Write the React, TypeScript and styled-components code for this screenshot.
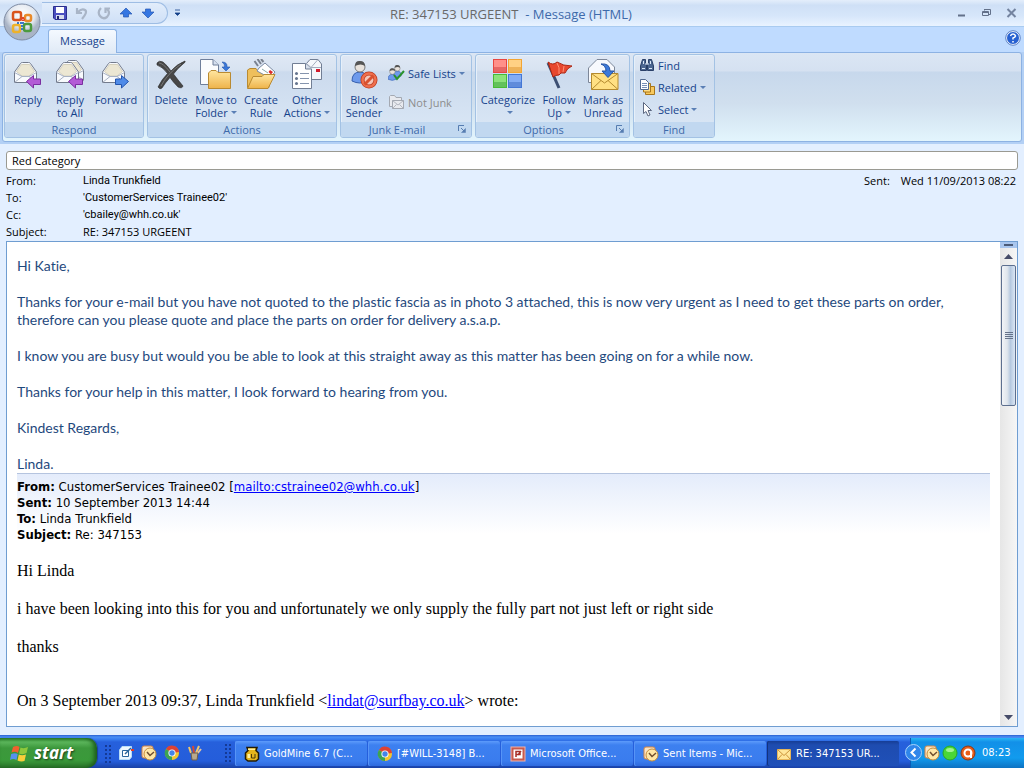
import React from "react";
import styled, { createGlobalStyle, css } from "styled-components";

const Global = createGlobalStyle`
  * { box-sizing: border-box; }
  body { margin: 0; background: #e3efff; }
  button { font: inherit; color: inherit; margin: 0; padding: 0; border: 0; background: none; cursor: default; }
  p, dl, dd, h1, h2 { margin: 0; font-weight: normal; }
`;

const uiFont = `"Open Sans", "Noto Sans", sans-serif`;
const tahoma = `"DejaVu Sans Condensed", "DejaVu Sans", sans-serif`;

const Window = styled.div`
  min-height: 100vh;
  display: flex;
  flex-direction: column;
  font: 11px/13px ${uiFont};
  color: #15428b;
`;

/* ---------- title bar ---------- */
const TitleBar = styled.header`
  position: relative;
  display: flex;
  height: 27px;
  background: linear-gradient(#e4eefb, #cfe0f6 20%, #d6e6fa 60%, #e9f3ff);
  border-bottom: 1px solid #a9cbf0;
`;
const OfficeButton = styled.button`
  position: absolute;
  left: 3px;
  top: 3px;
  z-index: 2;
  width: 38px;
  height: 38px;
`;
const QuickAccess = styled.div`
  display: flex;
  align-items: center;
  gap: 6px;
  width: 126px;
  height: 22px;
  margin: 2px 0 0 42px;
  padding-left: 10px;
  border: 1px solid #9ebde4;
  border-left: 0;
  border-radius: 0 11px 11px 0;
  background: linear-gradient(#e2edfb, #cfe0f7);
`;
const QuickButton = styled.button`
  display: flex;
  width: 16px;
  height: 16px;
`;
const Customize = styled.button`
  display: flex;
  width: 8px;
  margin: 9px 0 0 6px;
  height: 8px;
`;
const Caption = styled.h1`
  flex: 1;
  padding: 5px 0 0 208px;
  font-size: 13px;
  line-height: 18px;
  color: #3e6aaa;
  white-space: pre;
`;
const CaptionName = styled.span`
  color: #696969;
`;
const WindowButtons = styled.div`
  display: flex;
  gap: 9px;
  padding: 5px 4px 0 0;
  height: 22px;
`;

/* ---------- ribbon ---------- */
const TabRow = styled.nav`
  display: flex;
  height: 25px;
  align-items: flex-end;
  justify-content: space-between;
  padding: 0 3px 0 48px;
  background: #bfdbff;
`;
const Tab = styled.button`
  position: relative;
  z-index: 1;
  width: 69px;
  height: 24px;
  margin-bottom: -1px;
  padding-bottom: 2px;
  border: 1px solid #8db2e3;
  border-bottom: 0;
  border-radius: 3px 3px 0 0;
  background: linear-gradient(#f4f9ff, #e0eaf6);
`;
const HelpButton = styled.button`
  width: 16px;
  height: 16px;
  margin-bottom: 6px;
`;
const RibbonFrame = styled.section`
  padding: 0 2px 2px;
  background: #b3d0f5;
`;
const Ribbon = styled.div`
  display: flex;
  gap: 3px;
  height: 90px;
  padding: 1px 1px 3px;
  border: 1px solid #8db2e3;
  border-radius: 3px;
  background: linear-gradient(#dbe6f4 0, #d5e1f1 18px, #c7d8ec 19px, #d0dfee 50px, #e3f5fd);
`;
const Group = styled.section<{ $w: number }>`
  display: flex;
  flex-direction: column;
  width: ${(p) => p.$w}px;
  border: 1px solid #a3c2e4;
  border-radius: 3px;
  box-shadow: inset 1px 1px 0 #e6f0fa;
  overflow: hidden;
  background: linear-gradient(#dfe8f5 0, #d8e3f1 15px, #cbdaed 17px, #dbe8f6);
`;
const GroupItems = styled.div`
  flex: 1;
  display: flex;
  padding: 2px 2px 0;
`;
const GroupTitle = styled.h2<{ $launcher?: boolean }>`
  position: relative;
  height: 15px;
  padding-right: ${(p) => (p.$launcher ? 18 : 0)}px;
  font-size: 11px;
  line-height: 15px;
  text-align: center;
  color: #3e6aaa;
  background: #c1d8f0;
`;
const Launcher = styled.button`
  position: absolute;
  right: 4px;
  top: 3px;
  display: flex;
`;
const BigButton = styled.button<{ $w: number }>`
  display: flex;
  flex-direction: column;
  align-items: center;
  width: ${(p) => p.$w}px;
  padding-top: 2px;
  white-space: nowrap;
  & > svg { margin-bottom: 2px; flex: none; }
`;
const SmallColumn = styled.div<{ $gap: number; $top: number }>`
  display: flex;
  flex-direction: column;
  align-items: flex-start;
  gap: ${(p) => p.$gap}px;
  padding: ${(p) => p.$top}px 0 0 3px;
`;
const SmallButton = styled.button`
  display: flex;
  align-items: center;
  gap: 3px;
  height: 16px;
  white-space: nowrap;
  &:disabled { color: #8d8d8d; }
`;
const Arrow = styled.span`
  display: inline-block;
  margin-left: 3px;
  vertical-align: 3px;
  border: 3px solid transparent;
  border-top-color: #5a7fb5;
  border-bottom: 0;
`;

/* ---------- message header ---------- */
const Pane = styled.main`
  flex: 1;
  display: flex;
  flex-direction: column;
  padding: 7px 6px 8px;
  background: #e3efff;
`;
const InfoBar = styled.div`
  height: 19px;
  padding: 0 5px;
  border: 1px solid #9a9a92;
  border-radius: 3px;
  background: #fff;
  line-height: 18px;
  color: #000;
`;
const Headers = styled.dl`
  display: grid;
  grid-template-columns: 77px 1fr auto auto;
  line-height: 17px;
  padding: 2px 2px 1px 0;
  color: #000;
`;
const Value = styled.dd<{ $wide?: boolean; $address?: boolean }>`
  ${(p) => p.$wide && css`grid-column: 2 / -1;`}
  ${(p) => p.$address && css`font-family: Roboto, ${uiFont};`}
`;
const SentLabel = styled.dt`
  padding-right: 11px;
`;

/* ---------- message body ---------- */
const Reader = styled.div`
  flex: 1;
  display: flex;
  border: 1px solid #6f9dd1;
  background: #fff;
`;
const Letter = styled.article`
  flex: 1;
  padding: 15px 10px 14px;
`;
const Reply = styled.div`
  font: 14px/18px Lato, "Open Sans", sans-serif;
  font-variant-ligatures: none;
  color: #1f497d;
  & > p + p { margin-top: 18px; }
`;
const Quoted = styled.div`
  height: 74px;
  padding-top: 5px;
  border-top: 1px solid #b5c4df;
  background: linear-gradient(#e4ecfb, #fff 60px);
  font: 13px/16px ${tahoma};
  color: #000;
`;
const Original = styled.div`
  font: 16px/19px "Liberation Serif", serif;
  color: #000;
  padding-top: 14px;
  & > p + p { margin-top: 19px; }
  & > p:last-child { margin-top: 35px; }
`;
const Link = styled.a`
  color: #0000ff;
`;
const ScrollBar = styled.div`
  display: flex;
  flex-direction: column;
  align-items: center;
  width: 17px;
  background: linear-gradient(90deg, #e6e6e6, #f6f6f6);
`;
const Splitter = styled.div`
  width: 17px;
  height: 6px;
  padding: 2px 4px;
  background: #a9c6ee;
  &::after { content: ""; display: block; height: 2px; background: #4b5b78; }
`;
const ScrollButton = styled.button`
  display: flex;
  align-items: center;
  justify-content: center;
  width: 17px;
  height: 17px;
`;
const Thumb = styled.div`
  display: flex;
  flex-direction: column;
  align-items: center;
  justify-content: center;
  gap: 1px;
  width: 15px;
  height: 141px;
  border: 1px solid #5d6f8f;
  border-radius: 2px;
  background: linear-gradient(90deg, #f2f4f7, #dfe5ec 40%, #b5c8df 65%, #dbe6f4);
`;
const Grip = styled.i`
  width: 8px;
  height: 1px;
  background: #66738a;
`;
const Spring = styled.div`
  flex: 1;
`;

/* ---------- task bar ---------- */
const TaskBar = styled.footer`
  display: flex;
  height: 33px;
  font: 11px/16px ${tahoma};
  color: #fff;
  background: linear-gradient(#2a5fd0 0, #4a8ff5 2px, #3a80f2 4px, #2660dc 7px, #245ddb 26px, #1941a5);
`;
const Start = styled.button`
  display: flex;
  align-items: center;
  gap: 5px;
  width: 97px;
  height: 30px;
  margin-top: 3px;
  padding-left: 10px;
  border-radius: 0 10px 10px 0;
  background: linear-gradient(#2f8a2f, #5cb65c 4px, #3c983c 10px, #3a9a3a 22px, #2a742a);
  box-shadow: inset -3px 0 4px #1c5c1c, 1px 0 1px #1a3f9a;
  font: italic bold 17px/20px "Open Sans", sans-serif;
  text-shadow: 1px 1px 2px #1b3d1b;
`;
const Handle = styled.i`
  width: 6px;
  height: 20px;
  margin: 9px 0 0;
  background: radial-gradient(circle at 1px 1px, #143a97 1px, transparent 1px) 0 0 / 4px 4px;
`;
const QuickLaunch = styled.div`
  display: flex;
  align-items: center;
  gap: 7px;
  width: 128px;
  margin-top: 3px;
  padding-left: 8px;
  & > ${Handle} { margin-top: 3px; }
`;
const Tasks = styled.div`
  display: flex;
  flex: 1;
  gap: 1px;
  padding: 6px 9px 0 4px;
`;
const Task = styled.button<{ $active?: boolean }>`
  display: flex;
  align-items: center;
  gap: 4px;
  flex: 0 1 132px;
  height: 25px;
  padding-left: 9px;
  border-radius: 2px;
  white-space: nowrap;
  background: ${(p) => (p.$active ? "linear-gradient(#163d96, #1e4cb0 4px, #1f50b8)" : "linear-gradient(#5d9bfb, #3d80f0 4px, #3a7cee 20px, #2f6ade)")};
  box-shadow: inset 1px 0 0 ${(p) => (p.$active ? "#12337e" : "#5794f7")};
`;
const Tray = styled.div`
  position: relative;
  display: flex;
  align-items: center;
  gap: 2px;
  width: 114px;
  height: 30px;
  margin-top: 3px;
  padding-left: 13px;
  border-left: 1px solid #0a5bb5;
  background: linear-gradient(#29b6f5, #1290e8 4px, #119bee 20px, #0d72c2);
`;
const TrayToggle = styled.button`
  position: absolute;
  left: -6px;
  top: 6px;
  width: 17px;
  height: 17px;
`;
const Clock = styled.time`
  padding-left: 4px;
`;

/* ---------- drawings ---------- */
const Envelope = ({ x = 0, y = 0 }: { x?: number; y?: number }) => (
  <g transform={`translate(${x} ${y})`} stroke="#737b8c" strokeWidth="1" strokeLinejoin="round">
    <path d="M.5 10 6.500 1.500Q7 .5 8.500 .5H14.500Q16 .5 16.500 1.500L22.500 10V20.500H.5z" fill="#f8fafd" />
    <path d="M2.500 9.500 7.500 2.500H15.500L20.500 9.500 15 14H8z" fill="#ece7d3" stroke="#d5d0bd" />
    <path d="M.5 10.500 8 14.500H15L22.500 10.500M.5 20.500 8 14.500M22.500 20.500 15 14.500" fill="none" stroke="#a8b2c4" />
  </g>
);
const ReplyArrow = () => <path d="M13.500 22.500 20.500 16.500V20H27.500V25.500H20.500V29z" fill="#b35bd6" stroke="#7b2fa0" />;
const ReplyIcon = () => <svg width="30" height="32"><Envelope x={1} y={3} /><ReplyArrow /></svg>;
const ReplyAllIcon = () => <svg width="30" height="32"><Envelope x={6} y={1} /><Envelope x={1} y={3} /><ReplyArrow /></svg>;
const ForwardIcon = () => (
  <svg width="30" height="32"><Envelope x={1} y={3} /><path d="M27.500 22.500 20.500 16.500V20H14.500V25.500H20.500V29z" fill="#4f8be8" stroke="#2455ae" /></svg>
);
const DeleteIcon = () => (
  <svg width="32" height="32">
    <path d="M2 4Q4 1 8 3Q12 6 16 12Q22 5 30 2Q31 3 28 5Q22 10 18.500 15Q23 21 28 27Q27 30 23 28Q18 23 15 18.500Q10 24 7 29Q5 31 3 28Q7 20 12.500 14.500Q8 8 2 6z" fill="#474747" stroke="#292929" strokeWidth=".6" />
    <path d="M4 4Q8 4 15 13M26 5Q12 15 6 27" stroke="#777" fill="none" />
  </svg>
);
const Defs = () => (
  <svg width="0" height="0" style={{ position: "absolute" }} aria-hidden="true">
    <defs>
      <linearGradient id="folder" x2="0" y2="1"><stop stopColor="#ffe6a0" /><stop offset="1" stopColor="#eeb34a" /></linearGradient>
      <radialGradient id="orb" cx=".5" cy=".3"><stop stopColor="#fff" /><stop offset=".7" stopColor="#e2e7ef" /><stop offset="1" stopColor="#a9b4c6" /></radialGradient>
    </defs>
  </svg>
);
const MoveIcon = () => (
  <svg width="32" height="32">
    <path d="M.5.5H13L18.500 6V25.500H.5z" fill="#fbfcfe" stroke="#6f7f9b" /><path d="M13 .5V6H18.500" fill="#d5dfee" stroke="#6f7f9b" />
    <path d="M22 3Q27.500 3 27 8H30L26 12 22 8H24.500Q25 5 22 3" fill="#3976d8" stroke="#2456aa" strokeWidth=".6" />
    <path d="M8.500 14 11 11.500H16L18 13.500H30.500V29.500H8.500z" fill="url(#folder)" stroke="#b98a32" />
  </svg>
);
const RuleIcon = () => (
  <svg width="32" height="32">
    <path d="M2.500 28.500V11L5 9.500H11L13 12H24V28.500z" fill="#eebf5c" stroke="#b98a32" />
    <path d="M14 9 20 4 30 13 25 19 12 12z" fill="#fff" stroke="#7c8ba3" /><path d="M9.500 2 13 7M12.500 0 16 5M16 0 18.500 3" stroke="#7a828f" strokeWidth="2" />
    <path d="M17 10 23 14" stroke="#8aa" /><path d="M25 11 28 13 26 15.500 23.500 13z" fill="#d92b2b" />
    <path d="M2.500 29.500 8 17.500H17L19 15.500H30L23 29.500z" fill="url(#folder)" stroke="#b98a32" />
  </svg>
);
const OtherIcon = () => (
  <svg width="32" height="32">
    <path d="M15.500 4.500 19 .5H27L30.500 5V20.500H15.500z" fill="#f5f7fb" stroke="#717e94" /><path d="M15.500 4.500 20 8.500 27 .5M20 8.500H30" fill="none" stroke="#a3adbe" /><path d="M25 10H29V13H25z" fill="#d21b2c" />
    <path d="M1.500 4.500H14.500L20.500 10V29.500H1.500z" fill="#fff" stroke="#717e94" /><path d="M14.500 4.500V10H20.500" fill="#d8e0ec" stroke="#717e94" />
    <path d="M9 14.500H18M9 19.500H18M9 24.500H18" stroke="#8594ad" />
    {[14.5, 19.5, 24.5].map((y) => <circle key={y} cx="5.500" cy={y} r="1.500" fill="#66758e" />)}
  </svg>
);
const Person = () => (
  <><path d="M1 21Q1 12 9 12Q16 12 16 21Q9 25 1 21" fill="#6d9aec" stroke="#365fae" /><circle cx="9" cy="7" r="5" fill="#e8e2dc" stroke="#777" /><path d="M4 6Q4 .5 9 1Q14 1 14 6Q10 3 4 6" fill="#555" /></>
);
const BlockIcon = () => (
  <svg width="32" height="32"><g transform="translate(3 1)"><Person /></g><circle cx="21" cy="21" r="6.500" fill="#f5c6b9" stroke="#b93a1e" strokeWidth="4" /><circle cx="21" cy="21" r="6.500" fill="none" stroke="#ef6f4d" strokeWidth="2.500" /><path d="M16.500 25.500 25.500 16.500" stroke="#d9512f" strokeWidth="3" /></svg>
);
const SafeIcon = () => (
  <svg width="17" height="16"><g transform="scale(.55)"><g transform="translate(8 -1)"><Person /></g><g transform="translate(-1 5)"><Person /></g></g><path d="M6 10 9 14 16 6" fill="none" stroke="#29922d" strokeWidth="2" /></svg>
);
const NotJunkIcon = () => (
  <svg width="17" height="16" fill="#e8eaef" stroke="#a4a9b2"><path d="M1.500 12.500V2.500L2.500 1.500H6.500L8 3.500H13.500V12.500z" /><path d="M4.500 6.500H15.500V14.500H4.500z" /><path d="M4.500 6.500 10 11 15.500 6.500M4.500 14.500 8.500 10.500M15.500 14.500 11.500 10.500" fill="none" strokeWidth=".8" /></svg>
);
const CategorizeIcon = () => (
  <svg width="32" height="32">
    {[[1, 0, "#e84741", "#ff9089"], [16, 0, "#f3a532", "#ffd184"], [1, 15, "#47ba36", "#8ce27a"], [16, 15, "#4377d6", "#83acf4"]].map(([x, y, a, b]) => (
      <g key={`${x}-${y}`}><rect x={Number(x) + 0.5} y={Number(y) + 0.5} width="13" height="13" fill={String(a)} fillOpacity=".8" stroke={String(a)} /><rect x={Number(x) + 1} y={Number(y) + 1} width="12" height="7" fill={String(b)} /></g>
    ))}
  </svg>
);
const FlagIcon = () => (
  <svg width="32" height="32"><path d="M5 4 16 29" stroke="#3c4f73" strokeWidth="3" /><path d="M5 3Q10 7 14 3Q20 7 29 7Q24 9 22 14Q17 13 16 16Q12 16 10 18z" fill="#e8482e" stroke="#ad2713" /><path d="M14 4Q17 8 16 15M21 7 20 13" stroke="#ff9277" fill="none" /></svg>
);
const UnreadIcon = () => (
  <svg width="32" height="32"><path d="M1.500 9 10 .5H20L27.500 8V23.500H1.500z" fill="#f7f9fd" stroke="#7d8799" /><path d="M4.500 14.500H31V30.500H4.500z" fill="#ffe083" stroke="#b48a2f" /><path d="M4.500 14.500 17.500 24 31 14.500M4.500 30.500 14 21.500M31 30.500 21 21.500" fill="none" stroke="#b48a2f" /><path d="M14 5Q23 4 23 12H27L21 18.500 15 12H19Q19 7 14 5" fill="#3b79da" stroke="#2453a3" /></svg>
);
const BinocularIcon = () => (
  <svg width="16" height="16" fill="#4c6690" stroke="#2a4068"><path d="M3.500 2.500H6.500V6L7.500 8V13.500H1.500V9zM9.500 2.500H12.500L14.500 9V13.500H8.500V8L9.500 6z" /><path d="M6 7H10M3 11.500H6M10 11.500H13M4.500 4V7M11.500 4V7" stroke="#dce8f7" /></svg>
);
const RelatedIcon = () => (
  <svg width="16" height="16"><path d="M6.500 9V6.500H9L10 7.500H15.500V15.500H6.500z" fill="#f8c95e" stroke="#a8761b" /><path d="M4.500 6V4.500H11.500V13H4.500z" fill="#ffdc83" stroke="#a8761b" /><path d="M1.500.5H6.500L9.500 3.500V10.500H1.500z" fill="#fff" stroke="#52698e" /><path d="M3 4.500H8M3 6.500H8M3 8.500H8" stroke="#7891b8" /></svg>
);
const SelectIcon = () => <svg width="16" height="16"><path d="M4.500 1.500V12.500L7 10.500 9 15 11 14 9 9.500H12.500z" fill="#fff" stroke="#5b6780" /></svg>;

const LogoPane = ({ x, y, w, c }: { x: number; y: number; w: number; c: string }) => <rect x={x} y={y} width={w} height={w} rx="2" fill="none" stroke={c} strokeWidth="2.500" />;
const OfficeIcon = () => (
  <svg width="38" height="38"><circle cx="19" cy="19" r="18" fill="url(#orb)" stroke="#7f8ca4" />
    <LogoPane x={10} y={9} w={8} c="#d9531c" /><LogoPane x={22} y={12} w={6} c="#e98b2a" /><LogoPane x={10} y={22} w={7} c="#eeb22a" /><LogoPane x={21} y={21} w={7} c="#4c9a3e" />
    <path d="M17.500 16.500H22M20 14V18" stroke="#e2452a" strokeWidth="2" strokeDasharray="2 1" /><path d="M14 20H21M19 19V28" stroke="#3a78c9" strokeWidth="2" strokeDasharray="2 1" /></svg>
);
const SaveIcon = () => <svg width="16" height="16"><path d="M1.500 1.500H14.500V14.500H3L1.500 13z" fill="#4b4fc0" stroke="#2a2e8d" /><path d="M4 2H12V8H4z" fill="#fff" /><path d="M4 10H12V14H4z" fill="#d7dcec" /><path d="M5 11H7V14H5z" fill="#20246f" /></svg>;
const UndoIcon = () => <svg width="16" height="16"><path d="M3 3V8H8M4 7Q8 3 11 5T8 14" fill="none" stroke="#a9b5c7" strokeWidth="2.200" /></svg>;
const RedoIcon = () => <svg width="16" height="16"><path d="M5 3Q1 7 4 11T11 12Q15 8 11 4M14 3.500H9.500V8" fill="none" stroke="#a9b5c7" strokeWidth="2.200" /></svg>;
const UpIcon = () => <svg width="16" height="16"><path d="M8 3 14 9H10.500V12H5.500V9H2z" fill="#3677e2" stroke="#2557b1" strokeWidth=".7" /></svg>;
const DownIcon = () => <svg width="16" height="16"><path d="M8 13 14 7H10.500V4H5.500V7H2z" fill="#3677e2" stroke="#2557b1" strokeWidth=".7" /></svg>;
const WinIcon = () => (
  <svg width="19" height="19"><path d="M3 3Q7 1 9.500 3L8 9Q5 7 1.500 8.500z" fill="#f0612e" /><path d="M10.500 3.500Q14 5 18 3L16.500 9Q13 11 9 9.500z" fill="#8ec83c" /><path d="M1.200 10Q5 8.500 7.700 10L6.500 16Q3 14 0 16z" fill="#5691ef" /><path d="M8.800 10.500Q12 12 16 10.500L14.500 17Q11 18 7.500 16.500z" fill="#f8ce3a" /></svg>
);
const ChromeIcon = () => (
  <svg width="16" height="16"><circle cx="8" cy="8" r="7" fill="#f4c52e" /><path d="M8 8 2 4A7 7 0 0 1 15 7z" fill="#dd4235" /><path d="M8 8 2 4A7 7 0 0 0 8 15z" fill="#3ca352" /><circle cx="8" cy="8" r="3.600" fill="#fff" /><circle cx="8" cy="8" r="2.700" fill="#4484e8" /></svg>
);
const OutlookIcon = () => <svg width="16" height="16"><rect x="1" y="1" width="11" height="12" rx="2" fill="#fbe3c2" stroke="#d18443" /><circle cx="9" cy="9" r="6" fill="#ffe7a7" stroke="#c78e3b" /><path d="M6 7 9 10.500 13 7" fill="none" stroke="#704e30" strokeWidth="1.500" /></svg>;
const DesktopIcon = () => <svg width="16" height="16"><path d="M1.500 5 4 1.500H13.500V12L11.500 14.500H1.500z" fill="#eaf6ff" stroke="#b7dcf7" /><path d="M4.500 5.500H10.500V11.500H4.500z" fill="#fff" stroke="#28659b" /><path d="M7 9 13 3" fill="none" stroke="#28659b" strokeWidth="1.500" /><path d="M13 5H16" stroke="#e13b27" strokeWidth="2" /></svg>;
const BrushIcon = () => <svg width="16" height="16"><path d="M4 8 2 2M9 8 12 1" stroke="#f0c56a" strokeWidth="2" /><path d="M7 8 6 1" stroke="#d64b32" strokeWidth="2" /><path d="M10 9 14 4" stroke="#e5c39f" strokeWidth="2" /><path d="M4 8H11L10 15H5z" fill="#b9a98c" stroke="#6d5f4c" /></svg>;
const GoldIcon = () => <svg width="16" height="16"><path d="M3 1.500H13L12 4.500 14.500 7V13L12 15H4L1.500 13V7L4 4.500z" fill="#e5b51d" stroke="#221b08" strokeWidth="1.500" /><path d="M4 2.500H11V4H4zM3.500 8H6V12H3.500z" fill="#fff1a2" /><path d="M7.500 8V12H11V8" fill="none" stroke="#4b3a0c" /></svg>;
const PowerIcon = () => <svg width="16" height="16"><rect x="1" y="1" width="14" height="14" fill="#c75b4f" stroke="#f1b1a7" /><path d="M3.500 3.500H12.500V12.500H3.500z" fill="#fff" /><path d="M6 11V5.500H10V8.500H6M8 9 11 5" fill="none" stroke="#a72e27" strokeWidth="1.500" /></svg>;
const MailIcon = () => <svg width="16" height="16"><path d="M1.500 3.500H14.500V13.500H1.500z" fill="#ffe69a" stroke="#e5b55c" /><path d="M1.500 3.500 8 9.500 14.500 3.500M1.500 13.500 6 8.500M14.500 13.500 10 8.500" fill="none" stroke="#cb943c" /></svg>;
const GreenDot = () => <svg width="16" height="16"><circle cx="8" cy="8" r="7" fill="#4ad737" stroke="#2aa824" /><ellipse cx="8" cy="5" rx="4" ry="2" fill="#a1f391" /></svg>;
const AvastIcon = () => <svg width="16" height="16"><circle cx="8" cy="8" r="7" fill="#e85d18" stroke="#8d3514" /><circle cx="8" cy="8" r="3.500" fill="none" stroke="#fff" strokeWidth="2" /><path d="M11 6V13" stroke="#fff" strokeWidth="2" /></svg>;
const LaunchIcon = () => <svg width="9" height="9"><path d="M.5 6V.5H6" fill="none" stroke="#567db1" /><path d="M3 3 6 6" stroke="#567db1" /><path d="M7.500 3.500V7.500H3.500z" fill="#567db1" stroke="#567db1" strokeWidth=".5" /></svg>;

export default function App() {
  return (
    <Window>
      <Global />
      <Defs />
      <TitleBar>
        <OfficeButton aria-label="Office"><OfficeIcon /></OfficeButton>
        <QuickAccess>
          <QuickButton aria-label="Save"><SaveIcon /></QuickButton>
          <QuickButton aria-label="Undo"><UndoIcon /></QuickButton>
          <QuickButton aria-label="Redo"><RedoIcon /></QuickButton>
          <QuickButton aria-label="Previous item"><UpIcon /></QuickButton>
          <QuickButton aria-label="Next item"><DownIcon /></QuickButton>
        </QuickAccess>
        <Customize aria-label="Customize toolbar"><svg width="7" height="8"><path d="M1 1H6M1 4H6L3.500 6.500z" stroke="#15428b" fill="#15428b" strokeWidth=".8" /></svg></Customize>
        <Caption><CaptionName>RE: 347153 URGEENT</CaptionName>{"  - Message (HTML)"}</Caption>
        <WindowButtons>
          <QuickButton aria-label="Minimize"><svg width="16" height="16"><path d="M4 10.500H11" stroke="#63718a" strokeWidth="2" /></svg></QuickButton>
          <QuickButton aria-label="Restore"><svg width="16" height="16" fill="none" stroke="#63718a"><path d="M5.500 5.500V4.500H11.500V9.500H10M3.500 6.500H9.500V10.500H3.500zM5 4.500H11M3 7.500H9" /></svg></QuickButton>
          <QuickButton aria-label="Close"><svg width="16" height="16"><path d="M3.500 4 11.500 12M11.500 4 3.500 12" stroke="#7484a0" strokeWidth="2" /></svg></QuickButton>
        </WindowButtons>
      </TitleBar>

      <TabRow>
        <Tab>Message</Tab>
        <HelpButton aria-label="Help"><svg width="16" height="16"><circle cx="8" cy="8" r="6.500" fill="#2761d1" stroke="#fff" /><circle cx="8" cy="8" r="7.300" fill="none" stroke="#496eb7" strokeWidth=".8" /><path d="M5.500 6Q6 4 8 4T10.500 6Q10 7.500 8 8V9.500M8 11V12.500" fill="none" stroke="#fff" strokeWidth="1.500" /></svg></HelpButton>
      </TabRow>
      <RibbonFrame>
        <Ribbon>
          <Group $w={140}>
            <GroupItems>
              <BigButton $w={42}><ReplyIcon />Reply</BigButton>
              <BigButton $w={42}><ReplyAllIcon />Reply<br />to All</BigButton>
              <BigButton $w={50}><ForwardIcon />Forward</BigButton>
            </GroupItems>
            <GroupTitle>Respond</GroupTitle>
          </Group>
          <Group $w={190}>
            <GroupItems>
              <BigButton $w={42}><DeleteIcon />Delete</BigButton>
              <BigButton $w={48}><MoveIcon />Move to<span>Folder<Arrow /></span></BigButton>
              <BigButton $w={42}><RuleIcon />Create<br />Rule</BigButton>
              <BigButton $w={50}><OtherIcon />Other<span>Actions<Arrow /></span></BigButton>
            </GroupItems>
            <GroupTitle>Actions</GroupTitle>
          </Group>
          <Group $w={132}>
            <GroupItems>
              <BigButton $w={42}><BlockIcon />Block<br />Sender</BigButton>
              <SmallColumn $gap={13} $top={8}>
                <SmallButton><SafeIcon /><span>Safe Lists<Arrow /></span></SmallButton>
                <SmallButton disabled><NotJunkIcon />Not Junk</SmallButton>
              </SmallColumn>
            </GroupItems>
            <GroupTitle $launcher>Junk E-mail<Launcher aria-label="Junk e-mail options"><LaunchIcon /></Launcher></GroupTitle>
          </Group>
          <Group $w={155}>
            <GroupItems>
              <BigButton $w={60}><CategorizeIcon />Categorize<span><Arrow /></span></BigButton>
              <BigButton $w={42}><FlagIcon />Follow<span>Up<Arrow /></span></BigButton>
              <BigButton $w={46}><UnreadIcon />Mark as<br />Unread</BigButton>
            </GroupItems>
            <GroupTitle $launcher>Options<Launcher aria-label="Message options"><LaunchIcon /></Launcher></GroupTitle>
          </Group>
          <Group $w={82}>
            <GroupItems>
              <SmallColumn $gap={6} $top={0}>
                <SmallButton><BinocularIcon />Find</SmallButton>
                <SmallButton><RelatedIcon /><span>Related<Arrow /></span></SmallButton>
                <SmallButton><SelectIcon /><span>Select<Arrow /></span></SmallButton>
              </SmallColumn>
            </GroupItems>
            <GroupTitle>Find</GroupTitle>
          </Group>
        </Ribbon>
      </RibbonFrame>

      <Pane>
        <InfoBar>Red Category</InfoBar>
        <Headers>
          <dt>From:</dt><Value $address>Linda Trunkfield</Value><SentLabel>Sent:</SentLabel><Value>Wed 11/09/2013 08:22</Value>
          <dt>To:</dt><Value $wide $address>'CustomerServices Trainee02'</Value>
          <dt>Cc:</dt><Value $wide $address>'cbailey@whh.co.uk'</Value>
          <dt>Subject:</dt><Value $wide>RE: 347153 URGEENT</Value>
        </Headers>
        <Reader>
          <Letter>
            <Reply>
              <p>Hi Katie,</p>
              <p>Thanks for your e-mail but you have not quoted to the plastic fascia as in photo 3 attached, this is now very urgent as I need to get these parts on order, therefore can you please quote and place the parts on order for delivery a.s.a.p.</p>
              <p>I know you are busy but would you be able to look at this straight away as this matter has been going on for a while now.</p>
              <p>Thanks for your help in this matter, I look forward to hearing from you.</p>
              <p>Kindest Regards,</p>
              <p>Linda.</p>
            </Reply>
            <Quoted>
              <p><b>From:</b> CustomerServices Trainee02 [<Link href="mailto:cstrainee02@whh.co.uk">mailto:cstrainee02@whh.co.uk</Link>]</p>
              <p><b>Sent:</b> 10 September 2013 14:44</p>
              <p><b>To:</b> Linda Trunkfield</p>
              <p><b>Subject:</b> Re: 347153</p>
            </Quoted>
            <Original>
              <p>Hi Linda</p>
              <p>i have been looking into this for you and unfortunately we only supply the fully part not just left or right side</p>
              <p>thanks</p>
              <p>On 3 September 2013 09:37, Linda Trunkfield &lt;<Link href="mailto:lindat@surfbay.co.uk">lindat@surfbay.co.uk</Link>&gt; wrote:</p>
            </Original>
          </Letter>
          <ScrollBar>
            <Splitter />
            <ScrollButton aria-label="Scroll up"><svg width="9" height="5"><path d="M0 5 4.500 0 9 5z" fill="#454b68" /></svg></ScrollButton>
            <Thumb><Grip /><Grip /><Grip /><Grip /></Thumb>
            <Spring />
            <ScrollButton aria-label="Scroll down"><svg width="9" height="5"><path d="M0 0 4.500 5 9 0z" fill="#454b68" /></svg></ScrollButton>
          </ScrollBar>
        </Reader>
      </Pane>

      <TaskBar>
        <Start><WinIcon />start</Start>
        <QuickLaunch>
          <Handle />
          <QuickButton aria-label="Show desktop"><DesktopIcon /></QuickButton>
          <QuickButton aria-label="Outlook"><OutlookIcon /></QuickButton>
          <QuickButton aria-label="Chrome"><ChromeIcon /></QuickButton>
          <QuickButton aria-label="Paint"><BrushIcon /></QuickButton>
        </QuickLaunch>
        <Handle />
        <Tasks>
          <Task><GoldIcon />GoldMine 6.7 (C...</Task>
          <Task><ChromeIcon />[#WILL-3148] B...</Task>
          <Task><PowerIcon />Microsoft Office...</Task>
          <Task><OutlookIcon />Sent Items - Mic...</Task>
          <Task $active><MailIcon />RE: 347153 UR...</Task>
        </Tasks>
        <Tray>
          <TrayToggle aria-label="Show hidden icons"><svg width="17" height="17"><circle cx="8.500" cy="8.500" r="8" fill="#2f86ea" stroke="#a8d2fb" /><path d="M10.500 4.500 6.500 8.500 10.500 12.500" fill="none" stroke="#fff" strokeWidth="2" /></svg></TrayToggle>
          <OutlookIcon /><GreenDot /><AvastIcon />
          <Clock>08:23</Clock>
        </Tray>
      </TaskBar>
    </Window>
  );
}
